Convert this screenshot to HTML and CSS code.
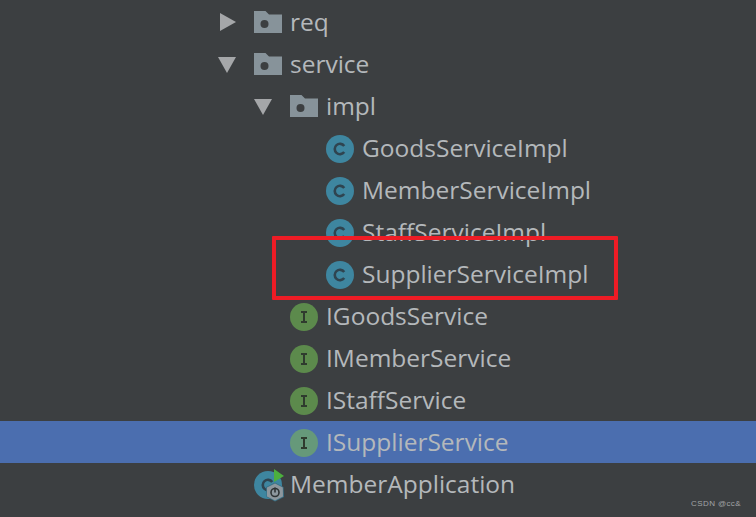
FILE: index.html
```html
<!DOCTYPE html>
<html lang="en">
<head>
<meta charset="utf-8">
<title>Project tree</title>
<link rel="stylesheet" href="styles.css">
</head>
<body>
<svg class="defs" width="0" height="0" aria-hidden="true">
  <defs>
    <symbol id="folder" viewBox="0 0 28 22">
      <path d="M0 0H11.5L15 3.5H28V22H0Z" fill="#87939a"/>
      <circle cx="10.5" cy="13" r="4" fill="#3c3f41"/>
    </symbol>
    <symbol id="cls" viewBox="0 0 28 28">
      <circle cx="14" cy="14" r="14" fill="#3e86a0"/>
      <path d="M18.2 11A5.2 5.2 0 1 0 18.2 17" fill="none" stroke="#2f4450" stroke-width="2.6"/>
    </symbol>
    <symbol id="iface" viewBox="0 0 28 28">
      <circle class="iface-disc" cx="14" cy="14" r="14"/>
      <path d="M11 9H17M14 9V19M11 19H17" fill="none" stroke="#2f3b2e" stroke-width="2"/>
    </symbol>
  </defs>
</svg>
<main class="tree">
  <div class="row depth-0">
    <svg class="arrow arrow-right" viewBox="0 0 16 18"><path d="M0 0V18L16 9Z"/></svg>
    <svg class="icon folder"><use href="#folder"/></svg><span class="label">req</span>
  </div>
  <div class="row depth-0">
    <svg class="arrow" viewBox="0 0 18 16"><path d="M0 0H18L9 16Z"/></svg>
    <svg class="icon folder"><use href="#folder"/></svg><span class="label">service</span>
  </div>
  <div class="row depth-1">
    <svg class="arrow" viewBox="0 0 18 16"><path d="M0 0H18L9 16Z"/></svg>
    <svg class="icon folder"><use href="#folder"/></svg><span class="label">impl</span>
  </div>
  <div class="row depth-2"><svg class="icon"><use href="#cls"/></svg><span class="label">GoodsServiceImpl</span></div>
  <div class="row depth-2"><svg class="icon"><use href="#cls"/></svg><span class="label">MemberServiceImpl</span></div>
  <div class="row depth-2"><svg class="icon"><use href="#cls"/></svg><span class="label">StaffServiceImpl</span></div>
  <div class="row depth-2"><svg class="icon"><use href="#cls"/></svg><span class="label">SupplierServiceImpl</span></div>
  <div class="row depth-1-leaf"><svg class="icon"><use href="#iface"/></svg><span class="label">IGoodsService</span></div>
  <div class="row depth-1-leaf"><svg class="icon"><use href="#iface"/></svg><span class="label">IMemberService</span></div>
  <div class="row depth-1-leaf"><svg class="icon"><use href="#iface"/></svg><span class="label">IStaffService</span></div>
  <div class="row depth-1-leaf selected"><svg class="icon"><use href="#iface"/></svg><span class="label">ISupplierService</span></div>
  <div class="row depth-0-leaf">
    <svg class="icon app" viewBox="0 0 30 33">
      <circle cx="14" cy="16" r="14" fill="#3e86a0"/>
      <path d="M18.2 13A5.2 5.2 0 1 0 18.2 19" fill="none" stroke="#2f4450" stroke-width="2.6"/>
      <path d="M20 0L30 7L20 13Z" fill="#4caf3e"/>
      <path d="M21 13.5L29.5 18L30 28L21 32.5L12.5 28L12 18Z" fill="#3a6f84"/>
      <path d="M21 14.5L28.8 18.5L29 27.5L21 31.5L13 27.5L13 18.5Z" fill="#8d979e"/>
      <circle cx="21" cy="23.5" r="4" fill="none" stroke="#2f3436" stroke-width="1.6"/>
      <path d="M21 18.5V23.5" stroke="#2f3436" stroke-width="1.6"/>
    </svg>
    <span class="label">MemberApplication</span>
  </div>
</main>
<div class="highlight"></div>
<div class="watermark">CSDN @cc&amp;</div>
</body>
</html>
```
FILE: styles.css
```css
* { box-sizing: border-box; }
html, body {
  margin: 0;
  width: 756px;
  height: 517px;
  overflow: hidden;
  background: #3c3f41;
}
.defs { position: absolute; }
.tree {
  padding-top: 1px;
  font-family: "Open Sans", sans-serif;
  font-size: 24.5px;
  color: #b4b8bb;
}
.row {
  display: flex;
  align-items: center;
  height: 42px;
}
.label { padding-bottom: 2px; }
.depth-0 { padding-left: 218px; }
.depth-1 { padding-left: 254px; }
.depth-2 { padding-left: 326px; }
.depth-1-leaf { padding-left: 290px; }
.depth-0-leaf { padding-left: 254px; }
.selected { background: #4b6eaf; }
.arrow {
  width: 18px;
  height: 16px;
  margin-top: 2px;
  margin-right: 18px;
  fill: #a5a7a9;
}
.arrow-right {
  width: 16px;
  height: 18px;
  margin-top: 0;
  margin-left: 2px;
}
.icon {
  width: 28px;
  height: 28px;
  margin-top: 2px;
  margin-right: 8px;
  flex: none;
}
.icon.folder { height: 22px; margin-top: 0; }
.icon.app { width: 30px; height: 33px; margin-top: 3px; margin-right: 6px; }
.iface-disc { fill: var(--iface-fill, #5c8a4c); }
.selected { --iface-fill: #66997a; }
.highlight {
  position: absolute;
  left: 272px;
  top: 236px;
  width: 346px;
  height: 64px;
  border: 4px solid #ee1c25;
  border-radius: 1px;
}
.watermark {
  position: absolute;
  right: 15px;
  bottom: 9px;
  font-family: "Liberation Sans", sans-serif;
  font-size: 8px;
  letter-spacing: 0.4px;
  color: #a2a4a6;
}
```
